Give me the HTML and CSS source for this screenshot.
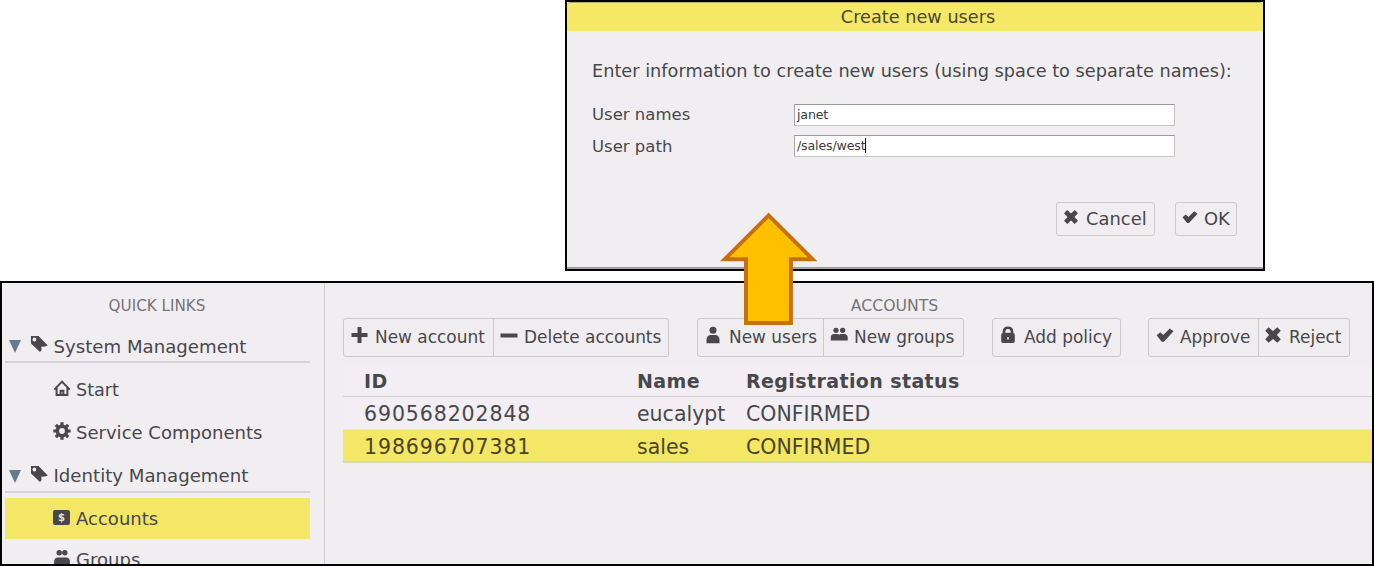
FILE: index.html
```html
<!DOCTYPE html>
<html lang="en">
<head>
<meta charset="utf-8">
<title>Accounts</title>
<link rel="stylesheet" href="styles.css">
</head>
<body>
<svg class="sprite" aria-hidden="true">
  <symbol id="plus" viewBox="0 0 18 18"><path d="M6.500 1h4v6h6v4h-6v6h-4v-6h-6V7h6z"/></symbol>
  <symbol id="minus" viewBox="0 0 18 18"><path d="M.5 7.500h17v4H.5z"/></symbol>
  <symbol id="user" viewBox="0 0 18 18"><circle cx="8" cy="4.300" r="3.500"/><path d="M1.500 17.300v-3.600c0-3 2-4.700 4-4.700h5c2 0 4 1.700 4 4.700v3.600z"/></symbol>
  <symbol id="users" viewBox="0 0 18 18"><circle cx="6" cy="4.300" r="2.600"/><circle cx="12.600" cy="4.300" r="2.600"/><path d="M.8 14.500v-3.100c0-2 1.200-3.400 3.200-3.400h3.700q1.200 0 1.600.8.400-.8 1.600-.8h3.500c2 0 3.300 1.400 3.300 3.400v3.100z"/></symbol>
  <symbol id="group" viewBox="0 0 18 18"><circle cx="6.200" cy="3.700" r="2.700"/><circle cx="11.800" cy="3.700" r="2.700"/><path d="M1 17v-3.500Q1 8.400 5 8.400h8q4 0 4 5.100V17z"/></symbol>
  <symbol id="lock" viewBox="0 0 18 18"><path fill-rule="evenodd" d="M2.600 7V5.500Q3 .6 8 .6t5.400 4.900V7q1.400.4 1.400 2v6q0 2-2 2H3.200q-2 0-2-2V9q0-1.600 1.400-2zm2.700-.3h5.400V5.400Q10.500 3.100 8 3.100T5.300 5.400zM7.200 11v2.400h1.600V11z"/></symbol>
  <symbol id="check" viewBox="0 0 18 18"><path d="M.6 9.200l3.600-3 3 2.900 6.600-6.700 3.700 2.900-9.600 10.400H5.700z"/></symbol>
  <symbol id="cross" viewBox="0 0 18 18"><path d="M4.700 1.200L9 5.100l4.300-3.900 3.500 3.600L12.900 9l3.900 4.200-3.500 3.600L9 12.900l-4.300 3.900-3.500-3.600L5.100 9 1.200 4.800z"/></symbol>
  <symbol id="tag" viewBox="0 0 18 18"><path fill-rule="evenodd" d="M1 1h7.500l9.300 9.600-2.800.9-3.800.2.400 3.200-1.600 2L1 8.500zM4.400 2.600a1.900 1.900 0 1 0 .01 0z"/></symbol>
  <symbol id="home" viewBox="0 0 18 18"><path fill="none" stroke="currentColor" stroke-width="2" d="M1.300 10.600L9 2.600l7.700 8M3.600 8.800V16h10.800V8.800M7.600 16v-4.200h2.800V16"/></symbol>
  <symbol id="gear" viewBox="0 0 18 18"><circle cx="9" cy="9" r="4.700" fill="none" stroke="currentColor" stroke-width="3.600"/><path fill="none" stroke="currentColor" stroke-width="3.200" d="M9 .3v3M9 14.700v3M.3 9h3M14.700 9h3M2.800 2.800l2 2M13.200 13.200l2 2M2.800 15.200l2-2M13.200 4.800l2-2"/></symbol>
</svg>

<div class="stage">
  <section class="dialog">
    <h1 class="dialog-title">Create new users</h1>
    <div class="dialog-body">
      <p class="prompt">Enter information to create new users (using space to separate names):</p>
      <div class="field"><span class="field-label">User names</span><span class="input">janet</span></div>
      <div class="field"><span class="field-label path">User path</span><span class="input">/sales/west<i class="caret"></i></span></div>
      <div class="dialog-actions">
        <span class="dialog-btn cancel"><svg><use href="#cross"/></svg>Cancel</span>
        <span class="dialog-btn ok"><svg><use href="#check"/></svg>OK</span>
      </div>
    </div>
  </section>

  <section class="console">
    <nav class="sidebar">
      <h2 class="caption">QUICK LINKS</h2>
      <div class="group"><i class="triangle"></i><svg class="tag"><use href="#tag"/></svg><span>System Management</span></div>
      <div class="links">
        <div class="link start"><svg><use href="#home"/></svg>Start</div>
        <div class="link"><svg><use href="#gear"/></svg>Service Components</div>
      </div>
      <div class="group identity"><i class="triangle"></i><svg class="tag"><use href="#tag"/></svg><span>Identity Management</span></div>
      <div class="links second">
        <div class="link selected"><span class="dollar">$</span>Accounts</div>
        <div class="link"><svg><use href="#group"/></svg>Groups</div>
      </div>
    </nav>
    <main class="content">
      <h2 class="caption accounts">ACCOUNTS</h2>
      <div class="toolbar">
        <div class="btn-group">
          <span class="btn new-account"><svg><use href="#plus"/></svg>New account</span>
          <span class="btn delete"><svg><use href="#minus"/></svg>Delete accounts</span>
        </div>
        <div class="btn-group">
          <span class="btn new-users"><svg><use href="#user"/></svg>New users</span>
          <span class="btn new-groups"><svg><use href="#users"/></svg>New groups</span>
        </div>
        <div class="btn-group">
          <span class="btn policy"><svg><use href="#lock"/></svg>Add policy</span>
        </div>
        <div class="btn-group last">
          <span class="btn approve"><svg><use href="#check"/></svg>Approve</span>
          <span class="btn reject"><svg><use href="#cross"/></svg>Reject</span>
        </div>
      </div>
      <div class="table">
        <div class="row head"><span>ID</span><span>Name</span><span>Registration status</span></div>
        <div class="row"><span class="num">690568202848</span><span>eucalypt</span><span>CONFIRMED</span></div>
        <div class="row active"><span class="num">198696707381</span><span>sales</span><span>CONFIRMED</span></div>
      </div>
    </main>
  </section>

  <svg class="arrow" viewBox="0 0 98 114"><path d="M48.600 3.400L92.600 47.300H70.900V111H26V47.300H4.700Z" fill="#ffc000" stroke="#c7700d" stroke-width="4"/></svg>
</div>
</body>
</html>
```
FILE: styles.css
```css
* { box-sizing: border-box; }
body {
  margin: 0;
  background: #fff;
  color: #48474b;
  font-family: "DejaVu Sans", sans-serif;
}
h1, h2, p { margin: 0; font-weight: normal; }
svg { display: block; flex: none; width: 18px; height: 18px; fill: currentColor; }
.sprite { position: absolute; width: 0; height: 0; }
.stage {
  position: relative;
  display: flex;
  flex-direction: column;
  gap: 10px;
  width: 1374px;
  height: 566px;
  overflow: hidden;
}

/* Dialog */
.dialog {
  width: 700px;
  height: 271px;
  margin-left: 565px;
  border: 2px solid #000;
  background: #f0eef1;
  box-shadow: inset 0 -2px #a09ea0;
}
.dialog-title {
  height: 29px;
  border-top: 1px solid #b5ad62;
  border-radius: 4px 4px 0 0;
  background: #f4e865;
  color: #4d482f;
  font-size: 17.700px;
  line-height: 29px;
  text-align: center;
  padding-left: 6px;
}
.dialog-body { padding: 29px 26px 0 25px; }
.prompt { height: 44px; font-size: 17.730px; line-height: 22px; white-space: nowrap; }
.field { display: flex; align-items: center; height: 22px; margin-bottom: 9px; }
.field-label { width: 202px; padding-bottom: 1px; font-size: 16.500px; }
.path { padding-bottom: 0; }
.input {
  display: flex;
  align-items: center;
  width: 381px;
  height: 22px;
  padding: 0 0 1px 2px;
  border: 1px solid #c4c4c1;
  border-top: 1px solid #9b999b;
  border-left-color: #aaa8aa;
  background: #fff;
  color: #3d3c3e;
  font-size: 12.600px;
  letter-spacing: -.15px;
}
.caret { width: 1px; height: 15px; background: #111; }
.dialog-actions { display: flex; justify-content: flex-end; gap: 20px; margin-top: 45px; }
.dialog-btn {
  display: flex;
  align-items: center;
  gap: 7px;
  height: 34px;
  padding: 0 0 2px 6px;
  border: 1px solid #cbc9cb;
  border-radius: 3px;
  font-size: 17.900px;
}
.dialog-btn svg { width: 16px; height: 16px; margin-top: -2px; }
.cancel { width: 99px; }
.ok { width: 62px; gap: 6px; }

/* Console */
.console {
  display: flex;
  height: 285px;
  border: 2px solid #000;
  background: #f0eef1;
}
.sidebar { width: 323px; padding-left: 3px; border-right: 1px solid #cdcbcf; overflow: hidden; }
.caption { height: 46px; color: #757478; font-size: 15.200px; line-height: 46px; text-align: center; }
.sidebar .caption { padding-right: 15px; }
.group {
  display: flex;
  align-items: center;
  width: 305px;
  height: 34px;
  border-bottom: 2px solid #d4d2d8;
  font-size: 18.150px;
  white-space: nowrap;
}
.group span { padding-top: 2px; }
.identity span { padding-top: 0; }
.triangle {
  width: 12px;
  height: 13px;
  margin: 3px 9px 0 4px;
  background: #68798e;
  clip-path: polygon(0 0, 100% 0, 50% 100%);
}
.tag { margin: -2px 5.500px 0 0; }
.links { display: flex; flex-direction: column; gap: 2px; padding: 6px 0; }
.second { padding-top: 5px; gap: 0; }
.link {
  display: flex;
  align-items: center;
  flex: none;
  gap: 5px;
  width: 305px;
  height: 41px;
  padding-left: 48px;
  font-size: 18.050px;
}
.link svg { margin-top: -4px; }
.start { font-size: 17.600px; }
.selected { background: #f3e765; }
.dollar {
  width: 17px;
  height: 15px;
  margin: -2px 1px 0 0;
  border-radius: 2px;
  background: #48474b;
  color: #e9e5cf;
  font-size: 10px;
  font-weight: bold;
  line-height: 15px;
  text-align: center;
}
.content { width: 1047px; padding-left: 18px; }
.accounts { height: 35px; padding-right: 0; width: 1103px; font-size: 15.700px; }
.toolbar { display: flex; gap: 28px; height: 39px; }
.btn-group {
  display: flex;
  flex: none;
  height: 39px;
  border: 1px solid #c9c8ca;
  border-radius: 3px;
  background: #efedef;
}
.btn {
  display: flex;
  align-items: center;
  gap: 6px;
  padding: 0 0 1px 7px;
  font-size: 16.950px;
  white-space: nowrap;
}
.btn + .btn { padding-left: 6px; border-left: 1px solid #c9c8ca; }
.btn svg { margin-top: -4px; }
.new-account { width: 149px; }
.delete { width: 175px; }
.new-users { width: 125px; }
.new-groups { width: 140px; }
.policy { width: 127px; }
.approve { width: 109px; }
.btn.reject { width: 91px; padding-left: 5px; gap: 7px; }
.last { margin-left: -1px; }
.table { width: 1029px; margin-top: 9px; background: #f2eef3; }
.row {
  display: grid;
  grid-template-columns: 273px 109px 1fr;
  align-items: center;
  height: 33px;
  padding: 2px 0 0 21px;
  border-bottom: 1px solid #e6e4ec;
  font-size: 20.500px;
  white-space: nowrap;
}
.head {
  height: 31px;
  padding-top: 0;
  border-bottom: 1px solid #d0cdd4;
  font-size: 19px;
  font-weight: bold;
  letter-spacing: .4px;
}
.active { border-bottom: 2px solid #d9d5bd; background: #f3e765; color: #4b4325; }
.num { letter-spacing: .9px; }

/* Callout arrow overlapping both windows */
.arrow { position: absolute; left: 720px; top: 212px; width: 98px; height: 114px; }
```
